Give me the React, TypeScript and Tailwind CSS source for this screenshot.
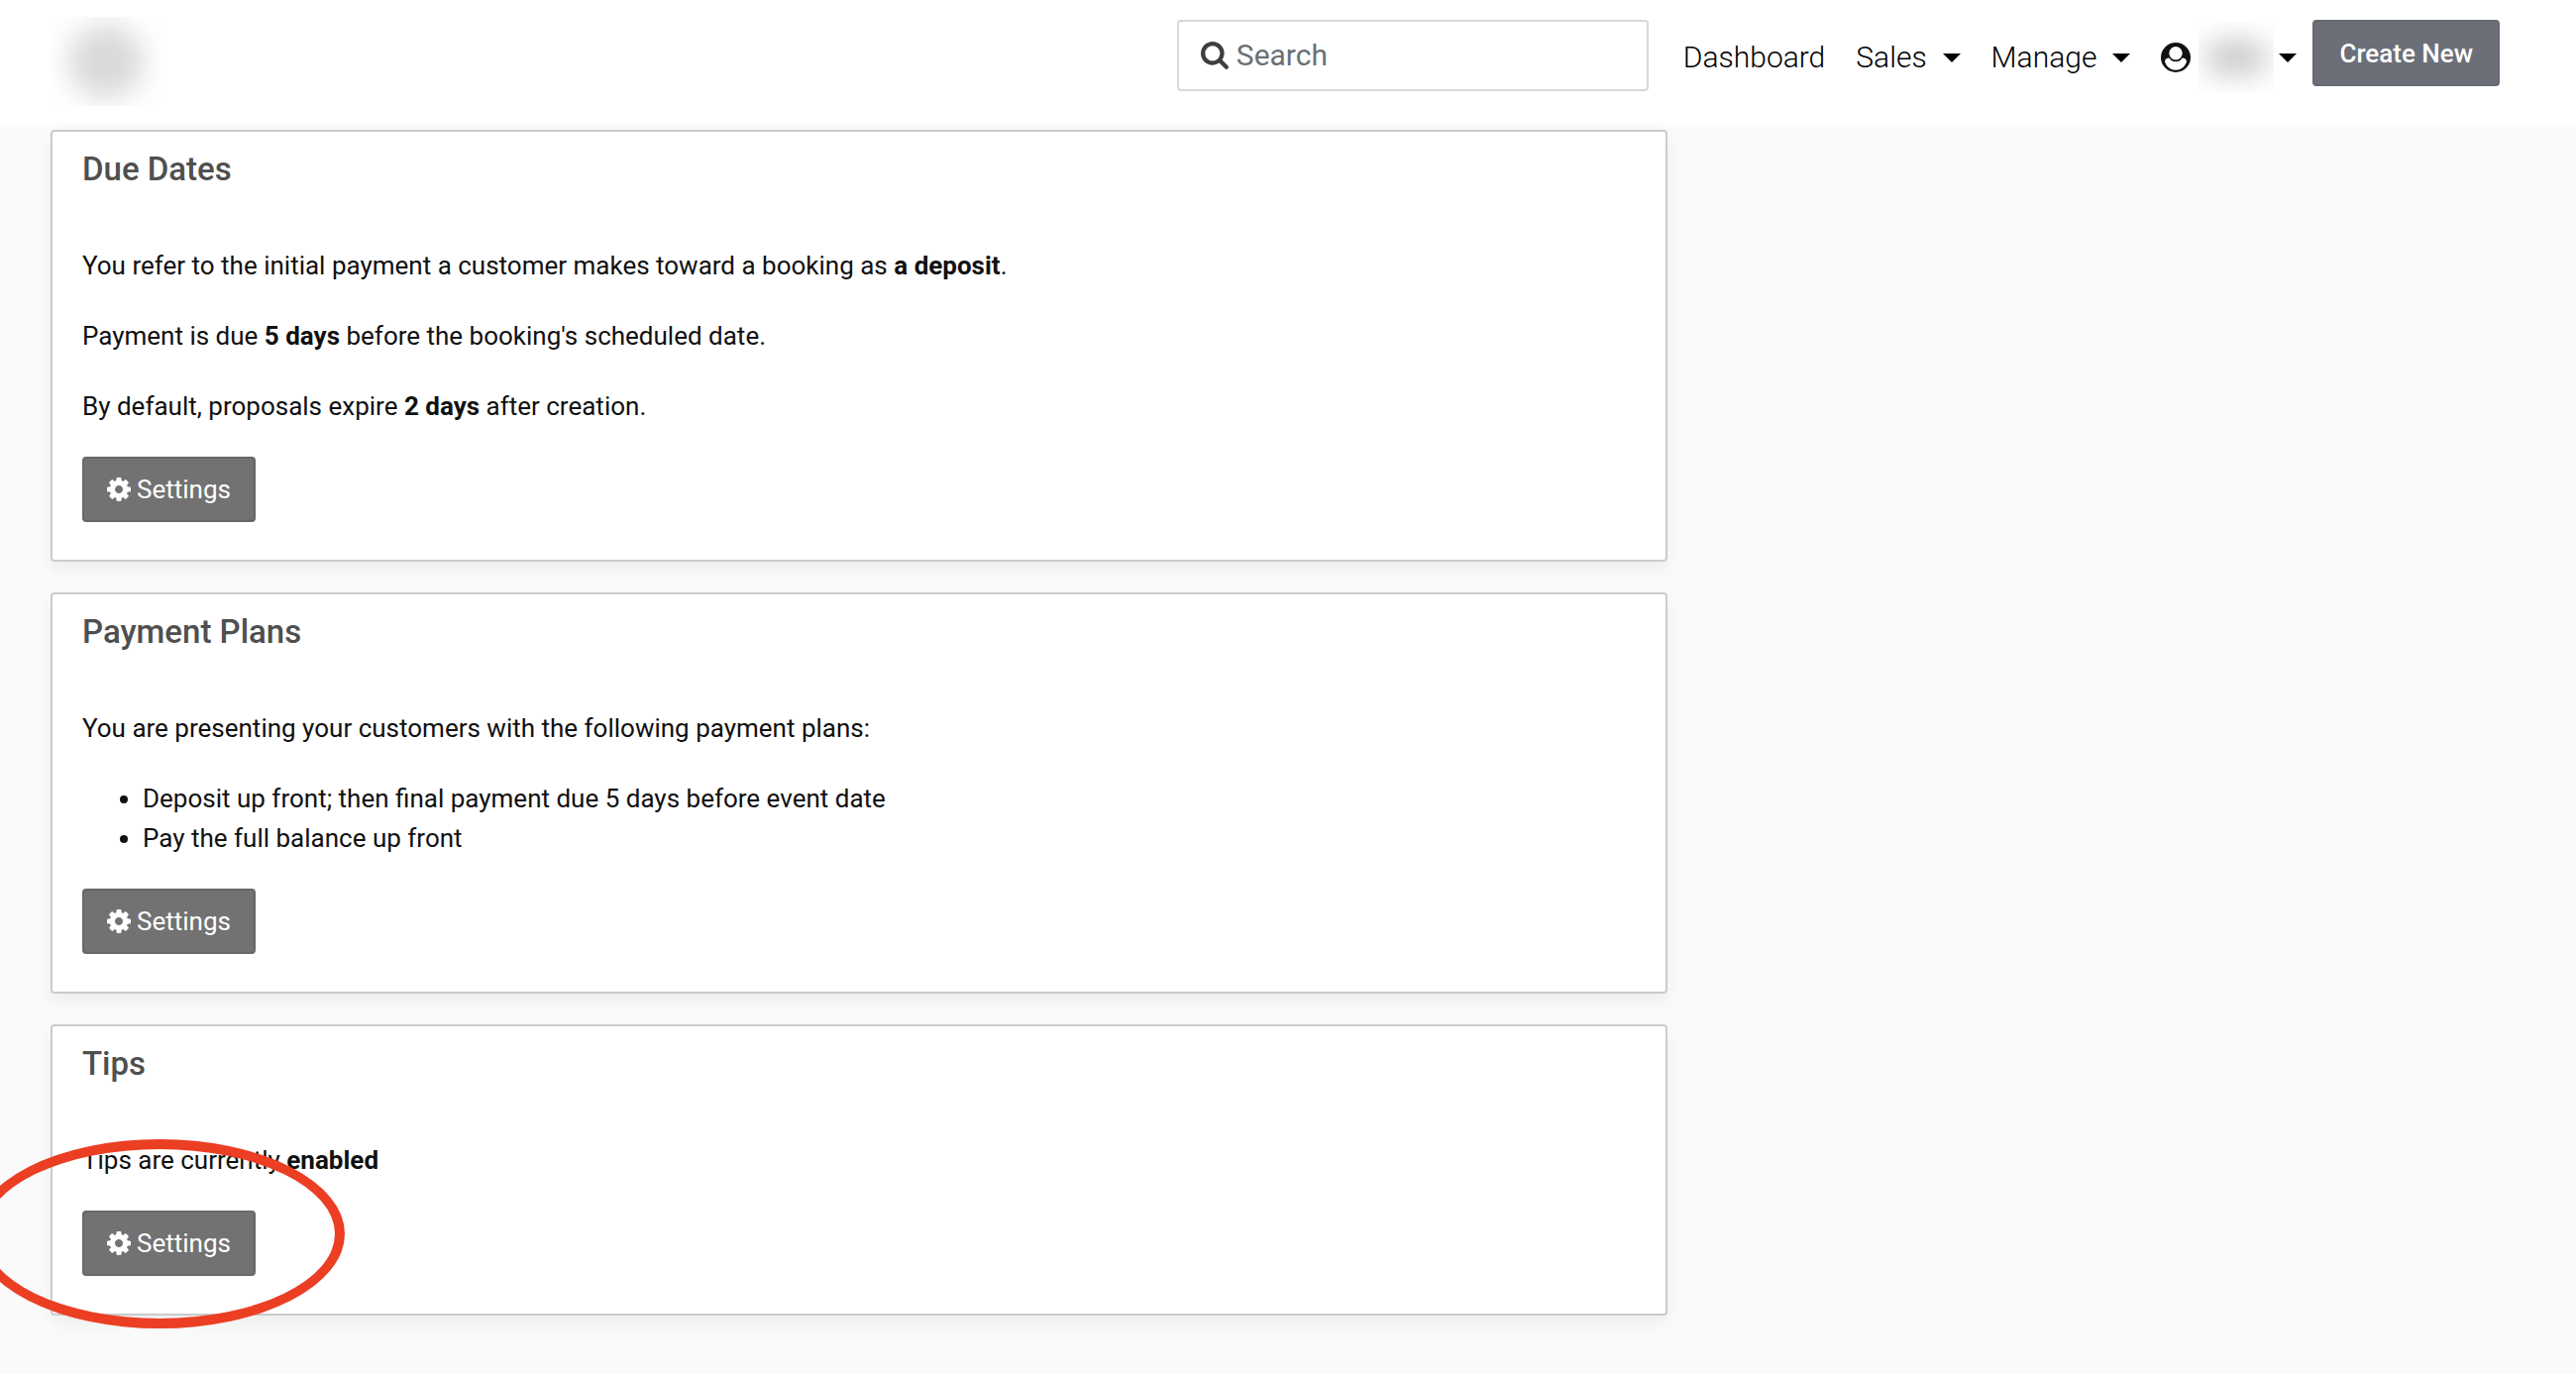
import { ReactNode } from 'react'

function GearIcon() {
    return (
        <svg viewBox="0 0 1536 1536" className="size-6" fill="currentColor" aria-hidden="true">
            <path d="M1024 768q0-106-75-181t-181-75-181 75-75 181 75 181 181 75 181-75 75-181zm512-109v222q0 12-8 23t-20 13l-185 28q-19 54-39 91 35 50 107 138 10 12 10 25t-9 23q-27 37-99 108t-94 71q-12 0-26-9l-138-108q-44 23-91 38-16 136-29 186-7 28-36 28h-222q-14 0-24.5-8.5t-11.5-21.5l-28-184q-49-16-90-37l-141 107q-10 9-25 9-14 0-25-11-126-114-165-168-7-10-7-23 0-12 8-23 15-21 51-66.5t54-70.5q-27-50-41-99l-183-27q-13-2-21-12.5t-8-23.5v-222q0-12 8-23t19-13l186-28q14-46 39-92-40-57-107-138-10-12-10-24 0-10 9-23 26-36 98.5-107.5t94.5-71.5q13 0 26 10l138 107q44-23 91-38 16-136 29-186 7-28 36-28h222q14 0 24.5 8.5t11.5 21.5l28 184q49 16 90 37l142-107q9-9 24-9 13 0 25 10 129 119 165 170 7 8 7 22 0 12-8 23-15 21-51 66.5t-54 70.5q26 50 41 98l183 28q13 2 21 12.5t8 23.5z" />
        </svg>
    )
}

function SearchIcon() {
    return (
        <svg viewBox="0 0 1664 1664" className="size-7 shrink-0 text-[#3c3f40]" fill="currentColor" aria-hidden="true">
            <path d="M1152 704q0-185-131.5-316.5t-316.5-131.5-316.5 131.5-131.5 316.5 131.5 316.5 316.5 131.5 316.5-131.5 131.5-316.5zm512 832q0 52-38 90t-90 38q-54 0-90-38l-343-342q-179 124-399 124-143 0-273.5-55.5t-225-150-150-225-55.5-273.5 55.5-273.5 150-225 225-150 273.5-55.5 273.5 55.5 225 150 150 225 55.5 273.5q0 220-124 399l343 343q37 37 37 90z" />
        </svg>
    )
}

function UserIcon() {
    return (
        <svg viewBox="0 0 30 30" className="size-[30px]" aria-hidden="true">
            <circle cx="15" cy="15" r="15" fill="#111" />
            <path d="M4 19.5C4 16.8 5.8 15.6 8.4 15.4 10 18 12.3 19.2 15 19.2s5-1.2 6.6-3.8C24.2 15.6 26 16.8 26 19.5 24 24.7 20 27.7 15 27.7S6 24.7 4 19.5Z" fill="#fff" />
            <circle cx="15" cy="10.8" r="6.7" fill="#fff" />
        </svg>
    )
}

function Caret() {
    return (
        <svg viewBox="0 0 18 9" className="h-[9px] w-[18px]" aria-hidden="true">
            <path d="M0 0h18L9 9Z" />
        </svg>
    )
}

function SettingsButton() {
    return (
        <button type="button" className="flex h-[66px] items-center gap-[6px] rounded-sm border-2 border-[#676767] bg-[#727272] px-[23px] text-white">
            <GearIcon />
            Settings
        </button>
    )
}

function Card({ title, children }: Readonly<{ title: string, children: ReactNode }>) {
    return (
        <section className="rounded-sm border-2 border-[#cbcbcb] bg-white px-[30px] pt-[18px] pb-[38px] shadow-[0_8px_16px_rgba(0,0,0,0.05)]">
            <h2 className="mb-[57px] text-[33px] leading-10 font-medium text-[#4f4f4f]">{title}</h2>
            <div className="flex flex-col items-start gap-[31px]">{children}</div>
        </section>
    )
}

export default function App() {
    return (
        <div className='min-h-screen overflow-hidden bg-[#fafafa] pb-12 font-["Roboto",sans-serif] text-[26px] leading-10 text-[#111]'>
            <header className="flex h-[126px] items-start justify-between bg-white pt-[17px] pr-[77px] pl-[52px]">
                <a href="#" aria-label="Home" className="flex h-[90px] w-[110px] items-center justify-center overflow-hidden">
                    <span className="size-[76px] rounded-full bg-[#d9d9d9] blur-[14px]" />
                </a>
                <div className="flex items-start pt-[3px]">
                    <label className="mr-[35px] flex h-[72px] w-[476px] items-center gap-2 rounded-sm border-2 border-[#d5d9d9] px-[22px]">
                        <SearchIcon />
                        <input type="search" aria-label="Search" placeholder="Search" className="w-full text-[30px] outline-none placeholder:text-[#6b6f73]" />
                    </label>
                    <nav className="flex h-[76px] items-center gap-[31px] text-[30px] font-light text-black">
                        <a href="#">Dashboard</a>
                        <button type="button" className="flex items-center gap-4">Sales <Caret /></button>
                        <button type="button" className="flex items-center gap-4">Manage <Caret /></button>
                        <button type="button" aria-label="Account" className="flex items-center">
                            <UserIcon />
                            <span className="mr-[5px] ml-2 flex h-[70px] w-[76px] items-center justify-center overflow-hidden">
                                <span className="h-9 w-16 rounded-full bg-[#cccccc] blur-[14px]" />
                            </span>
                            <Caret />
                        </button>
                    </nav>
                    <button type="button" className="ml-4 h-[67px] rounded-sm border-2 border-[#676a73] bg-[#6c6f78] px-[25px] font-medium text-white">Create New</button>
                </div>
            </header>
            <main className="flex w-2/3 flex-col gap-[31px] pt-[5px] pr-[50px] pl-[51px]">
                <Card title="Due Dates">
                    <p>You refer to the initial payment a customer makes toward a booking as <b>a deposit</b>.</p>
                    <p>Payment is due <b>5 days</b> before the booking's scheduled date.</p>
                    <p>By default, proposals expire <b>2 days</b> after creation.</p>
                    <SettingsButton />
                </Card>
                <Card title="Payment Plans">
                    <p>You are presenting your customers with the following payment plans:</p>
                    <ul className="list-disc pl-[61px]">
                        <li>Deposit up front; then final payment due 5 days before event date</li>
                        <li>Pay the full balance up front</li>
                    </ul>
                    <SettingsButton />
                </Card>
                <Card title="Tips">
                    <p>Tips are currently <b>enabled</b></p>
                    <div className="relative">
                        <SettingsButton />
                        {/* red ring calling out the tips settings */}
                        <div className="pointer-events-none absolute -top-[72px] -left-[109px] h-[191px] w-[374px] rounded-[50%] border-[10px] border-[#eb3e23]" />
                    </div>
                </Card>
            </main>
        </div>
    )
}
